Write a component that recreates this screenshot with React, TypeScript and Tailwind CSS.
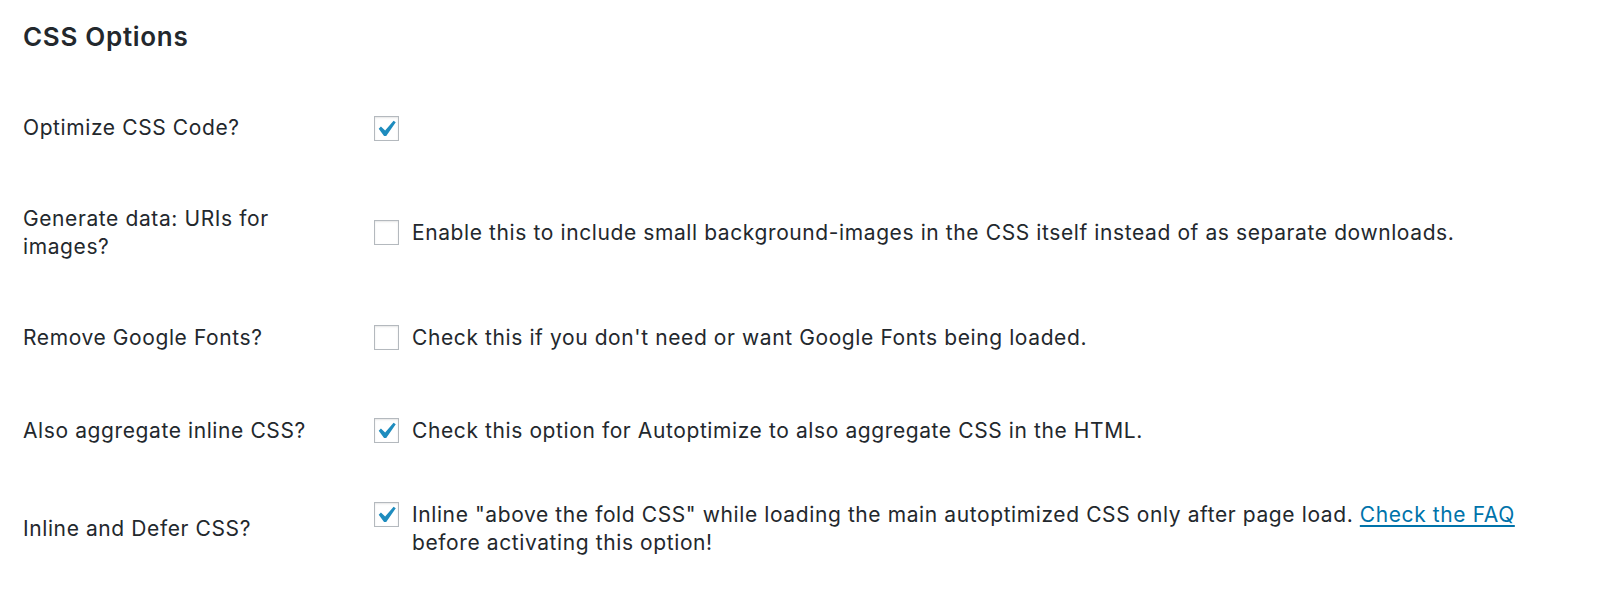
import type { ReactNode } from "react";

type Row = {
  label: string;
  checked: boolean;
  text?: ReactNode;
  height: string;
};

const rows: Row[] = [
  { label: "Optimize CSS Code?", checked: true, height: "h-[93px]" },
  {
    label: "Generate data: URIs for images?",
    checked: false,
    text: "Enable this to include small background-images in the CSS itself instead of as separate downloads.",
    height: "h-[117px]",
  },
  {
    label: "Remove Google Fonts?",
    checked: false,
    text: "Check this if you don't need or want Google Fonts being loaded.",
    height: "h-[93px]",
  },
  {
    label: "Also aggregate inline CSS?",
    checked: true,
    text: "Check this option for Autoptimize to also aggregate CSS in the HTML.",
    height: "h-[93px]",
  },
  {
    label: "Inline and Defer CSS?",
    checked: true,
    text: (
      <>
        Inline "above the fold CSS" while loading the main autoptimized CSS only after page load.{" "}
        <a href="#" className="text-[#0073aa] underline underline-offset-[3px]">
          Check the FAQ
        </a>
        <br />
        before activating this option!
      </>
    ),
    height: "h-[103px]",
  },
];

function Checkbox({ checked }: { checked: boolean }) {
  return (
    <span className="mt-[1.5px] mr-[13px] flex h-[25px] w-[25px] shrink-0 items-center justify-center border border-[#b4b9be] bg-white shadow-[inset_0_1px_2px_rgba(0,0,0,0.1)]">
      {checked && (
        <svg width="25" height="25" viewBox="2.9 1.95 15.24 15.24" className="shrink-0">
          <path
            d="M14.83 4.89l1.34.94-5.81 8.38H9.02L5.78 9.67l1.34-1.25 2.57 2.4z"
            fill="#1e8cbe"
          />
        </svg>
      )}
    </span>
  );
}

export default function App() {
  return (
    <div className="min-h-[594px] bg-white pl-[23px] font-['Inter',sans-serif] text-[21px] leading-[28px] tracking-[0.6px] text-[#23282d]">
      <h2 className="pt-[22px] text-[26px] leading-[30px] font-semibold tracking-[0.7px]">CSS Options</h2>

      <div className="mt-[29px]">
        {rows.map((row) => (
          <div key={row.label} className={`flex items-center ${row.height}`}>
            <div className="w-[351px] shrink-0">
              <span className="block max-w-[300px]">{row.label}</span>
            </div>
            <div className="flex items-start">
              <Checkbox checked={row.checked} />
              {row.text && <p>{row.text}</p>}
            </div>
          </div>
        ))}
      </div>
    </div>
  );
}
